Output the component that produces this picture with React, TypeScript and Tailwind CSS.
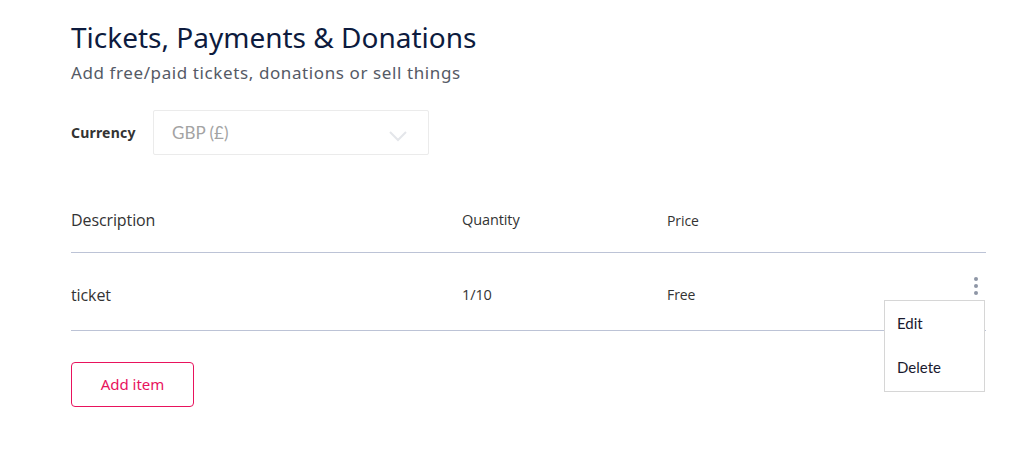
import React from "react";

export default function App() {
  return (
    <div className="w-[1031px] h-[449px] bg-white relative" style={{ fontFamily: "'Noto Sans', sans-serif" }}>
      <div className="pl-[71px] pr-[45px] pt-[19px]">
        <h1 className="text-[28px] leading-[36px] text-[#0d1b3e]">Tickets, Payments &amp; Donations</h1>
        <p className="text-[17px] leading-[24px] tracking-[0.6px] text-[#555a66] mt-[6px]">Add free/paid tickets, donations or sell things</p>

        <div className="flex items-center mt-[25px]">
          <span className="w-[82px] text-[14px] font-bold tracking-[0.2px] text-[#333]">Currency</span>
          <div className="w-[276px] h-[45px] border border-[#ebebeb] rounded-[2px] flex items-center justify-between pl-[18px] pr-[20px]">
            <span className="text-[17px] text-[#a3a3a3]" style={{ fontFamily: "Lato, sans-serif" }}>GBP (£)</span>
            <svg width="20" height="12" viewBox="0 0 20 12" fill="none" className="mt-[6px]">
              <path d="M2 2l8 8 8-8" stroke="#e4e6ea" strokeWidth="2" />
            </svg>
          </div>
        </div>

        <div className="mt-[33px]" style={{ fontFamily: "'Open Sans', sans-serif" }}>
          <div className="flex items-center h-[65px] border-b border-[#bcc3d6] text-[#333]">
            <div className="w-[391px] text-[16px] tracking-[-0.1px]">Description</div>
            <div className="w-[205px] text-[14.5px] tracking-[-0.1px]">Quantity</div>
            <div className="text-[14px] tracking-[-0.1px]">Price</div>
          </div>
          <div className="flex items-start pt-[31px] h-[78px] border-b border-[#bcc3d6] text-[#333] relative">
            <div className="w-[391px] text-[16px] leading-[22px] tracking-[-0.1px]">ticket</div>
            <div className="w-[205px] text-[14.5px] leading-[22px] tracking-[-0.1px]">1/10</div>
            <div className="text-[14px] leading-[22px] tracking-[-0.1px]">Free</div>
            <div className="absolute right-[8px] top-[24px] flex flex-col gap-[3px]">
              <span className="w-[4px] h-[4px] rounded-full bg-[#8e96a6]" />
              <span className="w-[4px] h-[4px] rounded-full bg-[#8e96a6]" />
              <span className="w-[4px] h-[4px] rounded-full bg-[#8e96a6]" />
            </div>
            <div className="absolute right-[1px] top-[47px] w-[101px] h-[92px] bg-white border border-[#d6d6d6] flex flex-col pl-[12px] text-[15px] text-[#1a1a2e] z-10" style={{ fontFamily: "Lato, sans-serif" }}>
              <span className="mt-[12px] leading-[20px]">Edit</span>
              <span className="mt-[24px] leading-[20px]">Delete</span>
            </div>
          </div>
        </div>

        <button className="mt-[31px] w-[123px] h-[45px] border border-[#e8135d] rounded-[4px] text-[15px] text-[#e8135d] bg-white">Add item</button>
      </div>
    </div>
  );
}
